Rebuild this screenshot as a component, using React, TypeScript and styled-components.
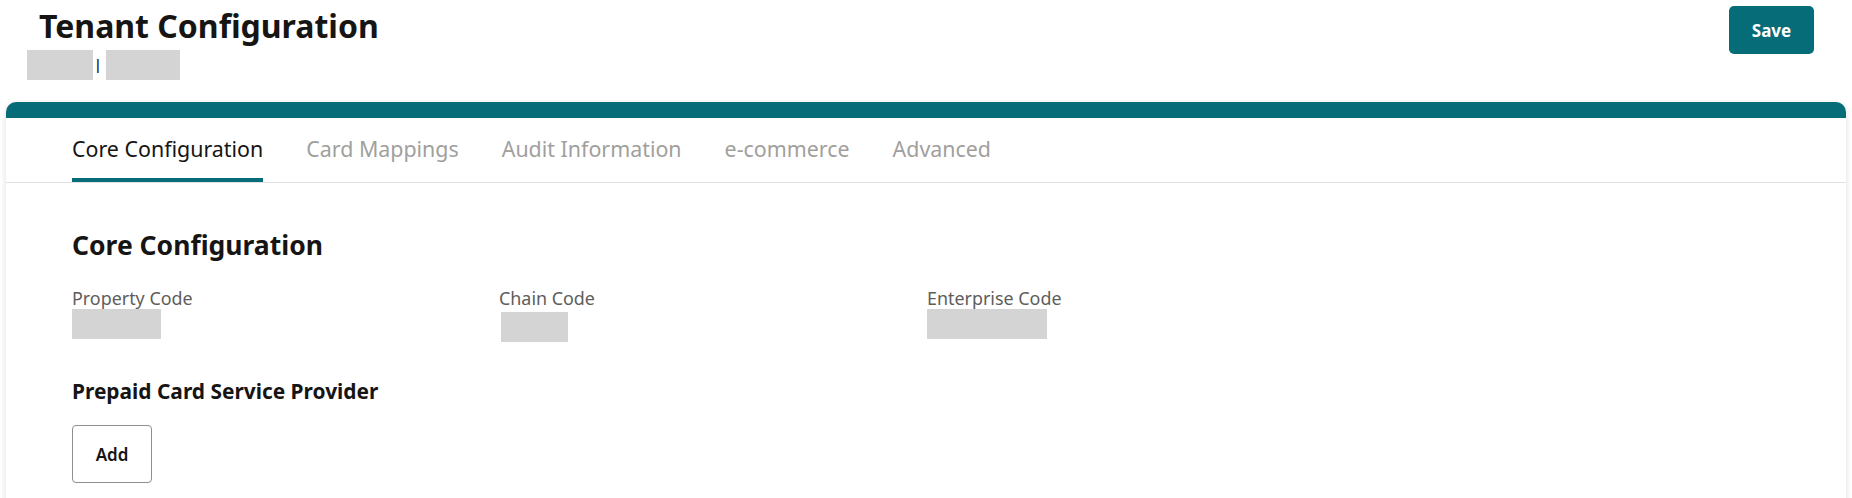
import React from 'react';
import styled, { createGlobalStyle } from 'styled-components';

const TEAL = '#066c78';

const GlobalStyle = createGlobalStyle`
  html, body {
    margin: 0;
    padding: 0;
    background: #fff;
  }
  body {
    font-family: 'Noto Sans', 'Open Sans', sans-serif;
    color: #161513;
    overflow-x: hidden;
  }
  * {
    box-sizing: border-box;
  }
`;

const tabs = ['Core Configuration', 'Card Mappings', 'Audit Information', 'e-commerce', 'Advanced'];

const fields = [
  { label: 'Property Code', width: 89, offset: 0 },
  { label: 'Chain Code', width: 67, offset: 3 },
  { label: 'Enterprise Code', width: 120, offset: 0 },
];

export default function App() {
  return (
    <StyledPage>
      <GlobalStyle />
      <StyledHeader>
        <div>
          <StyledTitle>Tenant Configuration</StyledTitle>
          <StyledSubtitle>
            <StyledRedacted width={66} />
            <StyledPipe>|</StyledPipe>
            <StyledRedacted width={74} />
          </StyledSubtitle>
        </div>
        <StyledPrimaryButton>Save</StyledPrimaryButton>
      </StyledHeader>

      <StyledCard>
        <StyledTabList>
          {tabs.map((tab, i) => (
            <StyledTab key={tab} isActive={i === 0}>{tab}</StyledTab>
          ))}
        </StyledTabList>

        <StyledBody>
          <StyledSectionTitle>Core Configuration</StyledSectionTitle>
          <StyledFieldGrid>
            {fields.map((field) => (
              <StyledField key={field.label}>
                <StyledLabel>{field.label}</StyledLabel>
                <StyledValue width={field.width} offset={field.offset} />
              </StyledField>
            ))}
          </StyledFieldGrid>

          <StyledSubTitle>Prepaid Card Service Provider</StyledSubTitle>
          <StyledOutlineButton>Add</StyledOutlineButton>
        </StyledBody>
      </StyledCard>
    </StyledPage>
  );
}

const StyledPage = styled.div`
  width: 1852px;
`;

const StyledHeader = styled.header`
  display: flex;
  justify-content: space-between;
  align-items: flex-start;
  padding: 6px 38px 0 27px;
`;

const StyledTitle = styled.h1`
  margin: 0 0 0 12px;
  font-size: 32px;
  line-height: 40px;
  font-weight: 700;
  color: #161513;
`;

const StyledSubtitle = styled.div`
  display: flex;
  align-items: center;
  margin-top: 3px;
  height: 31px;
`;

const StyledRedacted = styled.span<{ width: number }>`
  display: block;
  width: ${(p) => p.width}px;
  height: 30px;
  background: #d4d4d4;
`;

const StyledPipe = styled.span`
  margin: 0 4px 0 1px;
  font-size: 14px;
  line-height: 14px;
  font-weight: 600;
  color: #161513;
`;

const StyledPrimaryButton = styled.button`
  width: 85px;
  height: 48px;
  border: none;
  border-radius: 5px;
  background: ${TEAL};
  color: #fff;
  font-family: 'Noto Sans', 'Open Sans', sans-serif;
  font-size: 17px;
  font-weight: 700;
  cursor: pointer;
`;

const StyledCard = styled.section`
  margin: 22px 6px 0;
  min-height: 420px;
  border-top: 16px solid ${TEAL};
  border-radius: 10px 10px 0 0;
  background: #fff;
  box-shadow: 0 2px 6px rgba(0, 0, 0, 0.14);
`;

const StyledTabList = styled.nav`
  display: flex;
  gap: 43px;
  padding: 0 66px;
  border-bottom: 1px solid #e3e3e3;
`;

const StyledTab = styled.div<{ isActive: boolean }>`
  display: flex;
  align-items: center;
  height: 64px;
  border-bottom: 4px solid ${(p) => (p.isActive ? TEAL : 'transparent')};
  font-size: 21.4px;
  color: ${(p) => (p.isActive ? '#161513' : '#a19f9d')};
  cursor: pointer;
`;

const StyledBody = styled.div`
  padding: 46px 66px 40px;
`;

const StyledSectionTitle = styled.h2`
  margin: 0;
  font-size: 26.5px;
  line-height: 32px;
  font-weight: 700;
`;

const StyledFieldGrid = styled.div`
  display: grid;
  grid-template-columns: 427px 428px 427px;
  margin-top: 26px;
`;

const StyledField = styled.div`
  display: flex;
  flex-direction: column;
  align-items: flex-start;
`;

const StyledLabel = styled.span`
  font-size: 17.9px;
  line-height: 22px;
  color: #5e5d5b;
`;

const StyledValue = styled.span<{ width: number; offset: number }>`
  display: block;
  width: ${(p) => p.width}px;
  height: 30px;
  margin-top: ${(p) => p.offset}px;
  margin-left: ${(p) => (p.offset ? 2 : 0)}px;
  background: #d4d4d4;
`;

const StyledSubTitle = styled.h3`
  margin: 36px 0 0;
  font-size: 20.9px;
  line-height: 26px;
  font-weight: 700;
`;

const StyledOutlineButton = styled.button`
  margin-top: 21px;
  width: 80px;
  height: 58px;
  border: 1px solid #8f8f8f;
  border-radius: 4px;
  background: #fff;
  color: #161513;
  font-family: 'Noto Sans', 'Open Sans', sans-serif;
  font-size: 17px;
  font-weight: 600;
  cursor: pointer;
`;
